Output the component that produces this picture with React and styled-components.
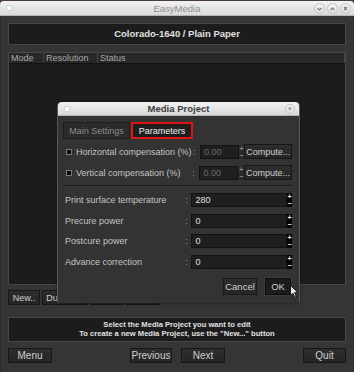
import React from "react";
import styled, { createGlobalStyle } from "styled-components";

const Global = createGlobalStyle`
  html, body { margin: 0; padding: 0; background: #4a3a48; }
  body { font-family: "Liberation Sans", Arial, sans-serif; }
  #root { width: 354px; height: 372px; }
  * { box-sizing: border-box; }
`;

const Window = styled.div`
  position: relative;
  width: 354px;
  height: 372px;
  display: flex;
  flex-direction: column;
  padding-top: 1px;
`;

const TitleBar = styled.div`
  flex: none;
  height: ${(p) => p.$h}px;
  display: grid;
  grid-template-columns: 1fr auto 1fr;
  align-items: center;
  background: linear-gradient(#f2f2f2, #d9d9d9);
  border-radius: 4px 4px 0 0;
  border-bottom: 1px solid #b5b5b5;
  color: ${(p) => (p.$dialog ? "#3c3c3c" : "#8e8e8e")};
  font-size: 9.5px;
  font-weight: ${(p) => (p.$dialog ? "bold" : "normal")};
`;

const Dot = styled.span`
  width: 4px;
  height: 4px;
  margin-left: ${(p) => p.$ml}px;
  border-radius: 1px;
  background: #ffffff;
  box-shadow: 0 0 0 1px #d0d0d0;
`;

const Controls = styled.div`
  display: flex;
  justify-content: flex-end;
  gap: 2px;
  padding-right: ${(p) => p.$pr}px;
`;

const CircleBtn = styled.span`
  width: ${(p) => p.$s}px;
  height: ${(p) => p.$s}px;
  border-radius: 50%;
  border: 1px solid #c4c4c4;
  background: linear-gradient(#f4f4f4, #dedede);
  display: flex;
  align-items: center;
  justify-content: center;
`;

const Body = styled.div`
  flex: 1;
  display: flex;
  flex-direction: column;
  padding: 7px 7px 9px;
  background: #353535;
  border-left: 1px solid #2c2c2c;
  border-right: 1px solid #2c2c2c;
`;

const Panel = styled.div`
  flex: none;
  height: ${(p) => p.$h}px;
  margin-top: ${(p) => p.$mt || 0}px;
  background: #1c1c1c;
  border: 1px solid #474747;
  display: flex;
  flex-direction: column;
  align-items: center;
  justify-content: center;
  color: #e2e2e2;
  font-weight: bold;
  font-size: ${(p) => p.$fs}px;
  line-height: ${(p) => p.$lh || 1.2};
`;

const Table = styled.div`
  flex: none;
  height: 233px;
  margin-top: 7px;
  background: #1c1c1c;
  border: 1px solid #474747;
  display: flex;
  flex-direction: column;
`;

const THead = styled.div`
  display: flex;
  height: 11px;
  background: #282828;
  border-bottom: 1px solid #111;
`;

const TH = styled.div`
  width: ${(p) => (p.$w ? `${p.$w}px` : "auto")};
  flex: ${(p) => (p.$w ? "none" : 1)};
  padding-left: 2px;
  border-right: 1px solid #444;
  color: #a8a8a8;
  font-size: 9px;
  line-height: 10px;
  white-space: nowrap;
`;

const Row = styled.div`
  flex: none;
  display: flex;
  gap: ${(p) => p.$gap || 0}px;
  margin-top: ${(p) => p.$mt || 0}px;
  height: ${(p) => p.$h}px;
`;

const Btn = styled.button`
  width: ${(p) => p.$w}px;
  height: 100%;
  padding: 0;
  margin: 0;
  font-family: "Liberation Sans", Arial, sans-serif;
  font-size: ${(p) => p.$fs || 10}px;
  color: #cfcfcf;
  background: linear-gradient(#2e2e2e, #252525);
  border: 1px solid #171717;
  border-radius: 0;
  text-align: center;
  white-space: nowrap;
`;

const Spacer = styled.div`
  flex: 1;
`;

const Dialog = styled.div`
  position: absolute;
  left: 57px;
  top: 102px;
  width: 243px;
  height: 201px;
  display: flex;
  flex-direction: column;
  border: 1px solid #5a5a5a;
  border-top: none;
  border-radius: 4px 4px 0 0;
  box-shadow: 0 0 3px rgba(0, 0, 0, 0.5);
`;

const DialogBody = styled.div`
  flex: 1;
  display: flex;
  flex-direction: column;
  padding: 6px 7px 8px 5px;
  background: #333333;
  font-size: 9px;
`;

const Tabs = styled.div`
  display: flex;
  gap: 1px;
  height: 17px;
`;

const Tab = styled.div`
  width: ${(p) => p.$w}px;
  display: flex;
  align-items: center;
  justify-content: center;
  background: ${(p) => (p.$active ? "#1e1e1e" : "#2b2b2b")};
  color: ${(p) => (p.$active ? "#f0f0f0" : "#8a8a8a")};
  border: ${(p) => (p.$active ? "2px solid #dd1515" : "1px solid #1c1c1c")};
  font-size: 9px;
`;

const FormRow = styled.div`
  display: flex;
  align-items: center;
  height: ${(p) => p.$h}px;
  margin-top: ${(p) => p.$mt}px;
  padding-left: ${(p) => p.$pl}px;
`;

const Check = styled.span`
  width: 6px;
  height: 6px;
  margin-right: 4px;
  background: #0a0a0a;
  border: 1px solid #7a7a7a;
`;

const Label = styled.span`
  width: ${(p) => p.$w}px;
  color: #c4c4c4;
  font-size: 9px;
  white-space: nowrap;
`;

const Colon = styled.span`
  width: ${(p) => p.$w}px;
  text-align: center;
  color: #9a9a9a;
  font-size: 9px;
  margin-right: ${(p) => p.$mr}px;
`;

const Input = styled.div`
  width: ${(p) => p.$w}px;
  height: 14px;
  display: flex;
  align-items: center;
  padding-left: 3px;
  background: #1f1f1f;
  border: 1px solid #131313;
  color: ${(p) => (p.$disabled ? "#6c6c6c" : "#e0e0e0")};
  font-size: 9px;
`;

const Spin = styled.div`
  width: ${(p) => p.$w}px;
  height: 14px;
  display: flex;
  flex-direction: column;
  background: ${(p) => (p.$disabled ? "#2a2a2a" : "#050505")};
  color: ${(p) => (p.$disabled ? "#8a8a8a" : "#f4f4f4")};
  font-size: 7px;
  font-weight: bold;
  line-height: 7px;
  text-align: center;
  overflow: hidden;
`;

const Separator = styled.div`
  height: 2px;
  margin-top: 5px;
  border-top: 1px solid #1b1b1b;
  border-bottom: 1px solid #3c3c3c;
`;

const Actions = styled.div`
  display: flex;
  justify-content: flex-end;
  gap: 8px;
  height: 17px;
  margin-top: 9px;
  padding-right: 1px;
`;

const DlgBtn = styled(Btn)`
  font-size: 9.5px;
  background: ${(p) => (p.$default ? "#1c1c1c" : "linear-gradient(#2e2e2e, #262626)")};
  border: 1px solid ${(p) => (p.$default ? "#0c0c0c" : "#1a1a1a")};
  box-shadow: ${(p) => (p.$default ? "0 0 0 1px #3e3e3e" : "none")};
`;

const Cursor = styled.svg`
  position: absolute;
  left: 290px;
  top: 285px;
`;

const StatusLine = styled.span`
  display: block;
  text-align: center;
`;

function WinIcon({ kind }) {
  const p =
    kind === "min"
      ? "M2.5 4 L4.5 6 L6.5 4"
      : kind === "max"
      ? "M2.5 6 L4.5 4 L6.5 6"
      : "M3 3 L6 6 M6 3 L3 6";
  return (
    <svg width="9" height="9" viewBox="0 0 9 9">
      <path d={p} stroke="#7a7a7a" strokeWidth="1.1" fill="none" />
    </svg>
  );
}

function ParamRow({ label, value, mt }) {
  return (
    <FormRow $h={14} $mt={mt} $pl={2}>
      <Label $w={119}>{label}</Label>
      <Colon $w={6} $mr={2}>:</Colon>
      <Input $w={96}>{value}</Input>
      <Spin $w={5}>
        <span>+</span>
        <span>−</span>
      </Spin>
    </FormRow>
  );
}

function CompRow({ label, mt }) {
  return (
    <FormRow $h={15} $mt={mt} $pl={3}>
      <Check />
      <Label $w={115}>{label}</Label>
      <Colon $w={6} $mr={3}>:</Colon>
      <Input $w={39} $disabled>0.00</Input>
      <Spin $w={6} $disabled>
        <span>+</span>
        <span>−</span>
      </Spin>
      <Btn $w={48} $fs={9}>Compute...</Btn>
    </FormRow>
  );
}

export default function App() {
  return (
    <>
      <Global />
      <Window>
        <TitleBar $h={15}>
          <Dot $ml={7} />
          <span>EasyMedia</span>
          <Controls $pr={3}>
            <CircleBtn $s={11}><WinIcon kind="min" /></CircleBtn>
            <CircleBtn $s={11}><WinIcon kind="max" /></CircleBtn>
            <CircleBtn $s={11}><WinIcon kind="close" /></CircleBtn>
          </Controls>
        </TitleBar>
        <Body>
          <Panel $h={22} $fs={9.5}>Colorado-1640 / Plain Paper</Panel>
          <Table>
            <THead>
              <TH $w={35}>Mode</TH>
              <TH $w={54}>Resolution</TH>
              <TH>Status</TH>
            </THead>
          </Table>
          <Row $h={15} $mt={5} $gap={2}>
            <Btn $w={32} $fs={9}>New..</Btn>
            <Btn $w={46} $fs={9}>Duplicate</Btn>
            <Btn $w={34} $fs={9}>Edit..</Btn>
            <Btn $w={34} $fs={9}>Delete</Btn>
          </Row>
          <Panel $h={25} $mt={12} $fs={7.6} $lh={1.1}>
            <StatusLine>Select the Media Project you want to edit</StatusLine>
            <StatusLine>To create a new Media Project, use the "New..." button</StatusLine>
          </Panel>
          <Row $h={15} $mt={6}>
            <Btn $w={44}>Menu</Btn>
            <Spacer />
            <Row $h={15} $gap={9}>
              <Btn $w={42}>Previous</Btn>
              <Btn $w={44}>Next</Btn>
            </Row>
            <Spacer />
            <Btn $w={43}>Quit</Btn>
          </Row>
        </Body>

        <Dialog>
          <TitleBar $h={14} $dialog>
            <Dot $ml={7} />
            <span>Media Project</span>
            <Controls $pr={4}>
              <CircleBtn $s={10}><WinIcon kind="close" /></CircleBtn>
            </Controls>
          </TitleBar>
          <DialogBody>
            <Tabs>
              <Tab $w={67}>Main Settings</Tab>
              <Tab $w={62} $active>Parameters</Tab>
            </Tabs>
            <CompRow label="Horizontal compensation (%)" mt={5} />
            <CompRow label="Vertical compensation (%)" mt={6} />
            <Separator />
            <ParamRow label="Print surface temperature" value="280" mt={6} />
            <ParamRow label="Precure power" value="0" mt={6.5} />
            <ParamRow label="Postcure power" value="0" mt={6.5} />
            <ParamRow label="Advance correction" value="0" mt={6.5} />
            <Actions>
              <DlgBtn $w={34}>Cancel</DlgBtn>
              <DlgBtn $w={26} $default>OK</DlgBtn>
            </Actions>
          </DialogBody>
        </Dialog>

        <Cursor width="9" height="13" viewBox="0 0 9 13">
          <path
            d="M0.5 0.5 L0.5 10.5 L3 8.3 L4.8 12.3 L6.4 11.6 L4.7 7.7 L8 7.6 Z"
            fill="#e8e8e8"
            stroke="#1a1a1a"
            strokeWidth="1"
          />
        </Cursor>
      </Window>
    </>
  );
}
